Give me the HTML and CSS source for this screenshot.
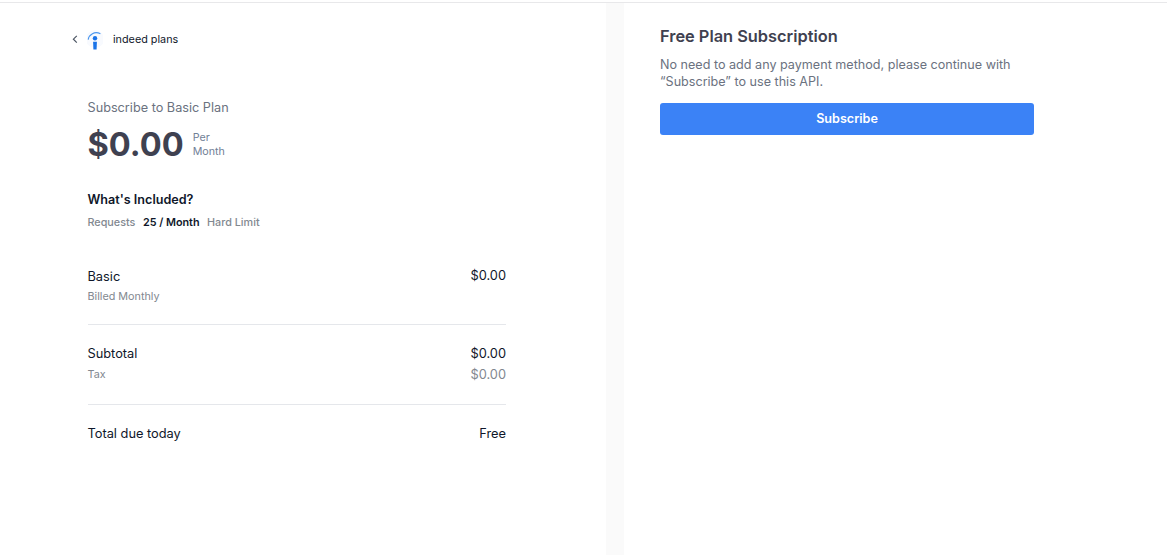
FILE: index.html
```html
<!DOCTYPE html>
<html lang="en">
  <head>
    <meta charset="UTF-8" />
    <meta name="viewport" content="width=device-width, initial-scale=1.0" />
    <title>Subscribe to Basic Plan</title>
    <link rel="stylesheet" href="styles.css">
  </head>
  <body>
    <div class="page">
      <div class="summary">
        <div class="brand">
          <svg class="back" width="6" height="10" viewBox="0 0 6 10">
            <path d="M4.8 1.8 1.4 5.2 4.8 8.6" fill="none" stroke="#4b5563" stroke-width="1.2" />
          </svg>
          <svg class="logo" width="16" height="22" viewBox="0 0 16 22">
            <circle cx="8" cy="11" r="9" fill="#f8fafe" />
            <path d="M1.2 11.6C2 6.6 7.6 2.8 13.4 5.8" fill="none" stroke="#4a96ee" stroke-width="1.2" />
            <circle cx="8" cy="10.2" r="2.2" fill="#1a73e8" />
            <path d="M6.1 13.8h3.8L9.6 21.4H6.4Z" fill="#1a73e8" />
          </svg>
          <span class="brand-name">indeed plans</span>
        </div>

        <div class="plan-title">Subscribe to Basic Plan</div>
        <div class="price">
          <span class="price-value">$0.00</span>
          <span class="price-period">Per<br />Month</span>
        </div>

        <h3 class="included-title">What's Included?</h3>
        <div class="included">
          <span>Requests</span>
          <strong>25 / Month</strong>
          <span>Hard Limit</span>
        </div>

        <div class="section section-first">
          <div class="row">
            <span class="label">Basic</span>
            <span class="amount">$0.00</span>
          </div>
          <div class="row row-sub">
            <span class="sub-label">Billed Monthly</span>
          </div>
        </div>

        <div class="section">
          <div class="row">
            <span class="label">Subtotal</span>
            <span class="amount">$0.00</span>
          </div>
          <div class="row row-sub">
            <span class="sub-label">Tax</span>
            <span class="sub-amount">$0.00</span>
          </div>
        </div>

        <div class="section section-last">
          <div class="row">
            <span class="label">Total due today</span>
            <span class="amount">Free</span>
          </div>
        </div>
      </div>

      <div class="divider"></div>

      <div class="checkout">
        <h2>Free Plan Subscription</h2>
        <p>No need to add any payment method, please continue with “Subscribe” to use this API.</p>
        <button>Subscribe</button>
      </div>
    </div>
  </body>
</html>
```

FILE: styles.css
```css
* {
  box-sizing: border-box;
}
html,
body {
  height: 100%;
}
body {
  margin: 0;
  padding-top: 2px;
  font-family: Inter, "Liberation Sans", sans-serif;
  color: #0f172a;
  background-color: #fff;
  overflow: hidden;
}
.page {
  display: flex;
  height: 100%;
  border-top: 1px solid #e8e8ea;
}
.summary {
  width: 606px;
  padding-left: 72px;
}
.brand {
  display: flex;
  align-items: center;
  height: 22px;
  margin-top: 25px;
}
.back {
  margin-right: 9px;
}
.logo {
  margin-right: 10px;
}
.brand-name {
  font-size: 10.8px;
  color: #0f172a;
}
.plan-title {
  margin: 48px 0 0 15.5px;
  font-size: 12.7px;
  line-height: 20px;
  color: #6b7280;
}
.price {
  display: flex;
  align-items: center;
  margin: 5px 0 0 15.5px;
}
.price-value {
  margin: -1px 0 1px;
  font-size: 32.6px;
  font-weight: 700;
  line-height: 44px;
  color: #3f4150;
}
.price-period {
  margin-left: 9px;
  font-size: 10.7px;
  line-height: 14px;
  color: #718096;
}
.included-title {
  margin: 23px 0 0 15.5px;
  font-size: 12.6px;
  font-weight: 600;
  line-height: 20px;
}
.included {
  display: flex;
  gap: 7.5px;
  margin: 5px 0 0 15.5px;
  font-size: 10.8px;
  font-weight: 500;
  line-height: 16px;
  color: #828890;
}
.included strong {
  font-weight: 600;
  color: #0f172a;
}
.section {
  width: 418.5px;
  margin-left: 15.5px;
  padding: 19px 0;
  border-bottom: 1px solid #e5e7eb;
}
.section-first {
  margin-top: 16px;
  padding-bottom: 17px;
}
.section-first .label {
  margin: 1px 0 -1px;
}
.section-last {
  border-bottom: none;
}
.row {
  display: flex;
  justify-content: space-between;
  font-size: 12.8px;
  line-height: 20px;
}
.row-sub {
  margin-top: 1px;
}
.sub-label {
  font-size: 10.8px;
  color: #828890;
}
.sub-amount {
  color: #828890;
}
.divider {
  width: 18px;
  background-color: #fafafa;
}
.checkout {
  width: 410px;
  padding: 21px 0 0 36px;
}
.checkout h2 {
  margin: 0;
  font-size: 16.38px;
  font-weight: 600;
  line-height: 24px;
  color: #3f4150;
}
.checkout p {
  margin: 9px 0 0;
  font-size: 12.6px;
  line-height: 16.5px;
  color: #6b7280;
}
.checkout button {
  display: block;
  width: 374px;
  height: 32px;
  margin-top: 13px;
  padding: 0 0 1px;
  border: none;
  border-radius: 3px;
  background-color: #3b82f6;
  color: #fff;
  font-family: inherit;
  font-size: 12.6px;
  font-weight: 600;
}
```
